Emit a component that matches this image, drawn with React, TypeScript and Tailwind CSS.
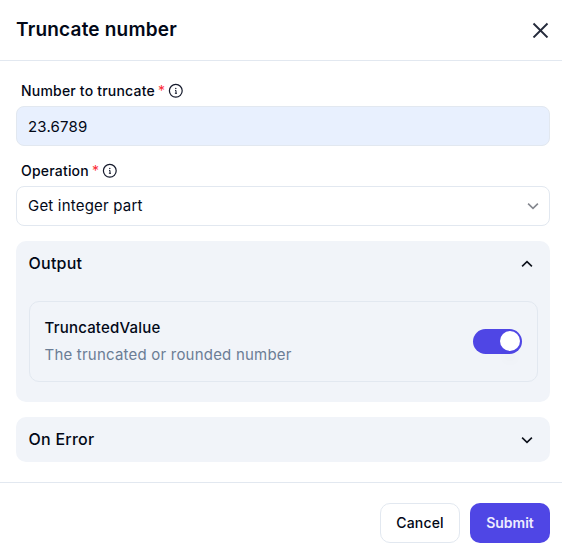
import { useState } from "react";

function Info() {
  return (
    <svg width="16" height="16" viewBox="0 0 16 16" fill="none" stroke="#151a2c" strokeWidth="1.2">
      <circle cx="7.8" cy="7.8" r="6.4" />
      <path d="M7 7.4h1v2.8M6.9 10.3h2.1" strokeWidth="1" />
      <circle cx="7.8" cy="5.4" r="0.7" fill="#151a2c" stroke="none" />
    </svg>
  );
}

function Chevron({ up = false, color = "#0d111b" }: { up?: boolean; color?: string }) {
  return (
    <svg width="12" height="8" viewBox="0 0 12 8" fill="none" stroke={color} strokeWidth="1.6">
      <path d={up ? "M1.1 6.4 6 1.7l4.9 4.7" : "M1.1 1.6 6 6.3l4.9-4.7"} />
    </svg>
  );
}

function Label({ text }: { text: string }) {
  return (
    <div className="flex h-5 items-center pl-[5px] text-sm font-medium tracking-[0.2px]">
      <span>{text}</span>
      <span className="ml-[3px] font-normal text-red-500">*</span>
      <span className="ml-[3px]"><Info /></span>
    </div>
  );
}

export default function App() {
  const [enabled, setEnabled] = useState(true);
  return (
    <main className="flex h-[547px] w-[562px] flex-col bg-white font-['Inter',sans-serif] text-[#020817]">
      <header className="flex h-[61px] shrink-0 items-center justify-between border-b border-[#e2e8f0] pl-4 pr-[13px]">
        <h1 className="text-[19px] font-semibold tracking-[0.2px]">Truncate number</h1>
        <button aria-label="Close">
          <svg width="17" height="16" viewBox="0 0 17 16" fill="none" stroke="#252b3c" strokeWidth="1.9"><path d="M1.5 1.5l14 14M15.5 1.5l-14 14" /></svg>
        </button>
      </header>
      <section className="flex h-[422px] flex-col border-b border-[#e2e8f0] px-4 pt-5 pr-3">
        <Label text="Number to truncate" />
        <input aria-label="Number to truncate" defaultValue="23.6789" className="mt-[5px] h-10 shrink-0 rounded-lg border border-[#e2e8f0] bg-[#e8f0fe] px-[11px] text-[15px] tracking-[0.2px] outline-none" />
        <div className="mt-[15px]"><Label text="Operation" /></div>
        <button className="mt-[5px] flex h-10 shrink-0 items-center justify-between rounded-lg border border-[#e2e8f0] pl-[11px] pr-[10px] text-[15px] tracking-[0.2px]">
          Get integer part<Chevron color="#85888f" />
        </button>
        <div className="mt-[15px] h-[161px] shrink-0 rounded-[10px] bg-[#f1f4f9] pr-3 pl-[13px]">
          <div className="-ml-[0.5px] flex h-[45px] items-center justify-between pr-[5px] text-base font-medium tracking-[0.25px]"><span className="pb-px">Output</span><Chevron up /></div>
          <div className="mt-[15px] flex h-[81px] items-center justify-between rounded-[10px] border border-[#e2e8f0] pr-[15px] pl-[14.5px]">
            <div className="pb-[2px] text-[15px] leading-[27px] tracking-[0.21px]">
              <div className="font-medium">TruncatedValue</div>
              <div className="text-[#6b7d95]">The truncated or rounded number</div>
            </div>
            <button role="switch" aria-label="TruncatedValue" aria-checked={enabled} onClick={() => setEnabled(!enabled)} className={`flex h-[25px] w-[49px] rounded-full p-[2px] ${enabled ? "justify-end bg-[#4f46e5]" : "justify-start bg-[#cbd5e1]"}`}>
              <span className="h-5 w-5 rounded-full bg-white shadow-[0_15px_12px_-5px_rgba(15,23,42,0.035)]" />
            </button>
          </div>
        </div>
        <div className="mt-[15px] flex h-[45px] shrink-0 items-center justify-between rounded-[10px] bg-[#f1f4f9] pl-[12.5px] pr-[17px] text-base font-medium tracking-[0.25px]"><span className="pb-px">On Error</span><Chevron /></div>
      </section>
      <footer className="flex gap-[10px] pt-5 pl-[380px] text-sm font-medium tracking-[0.18px]">
        <button className="h-10 w-20 rounded-[10px] border border-[#e2e8f0]">Cancel</button>
        <button className="h-10 w-20 rounded-[10px] bg-[#4f46e5] font-semibold tracking-normal text-[#eeecff]">Submit</button>
      </footer>
    </main>
  );
}
